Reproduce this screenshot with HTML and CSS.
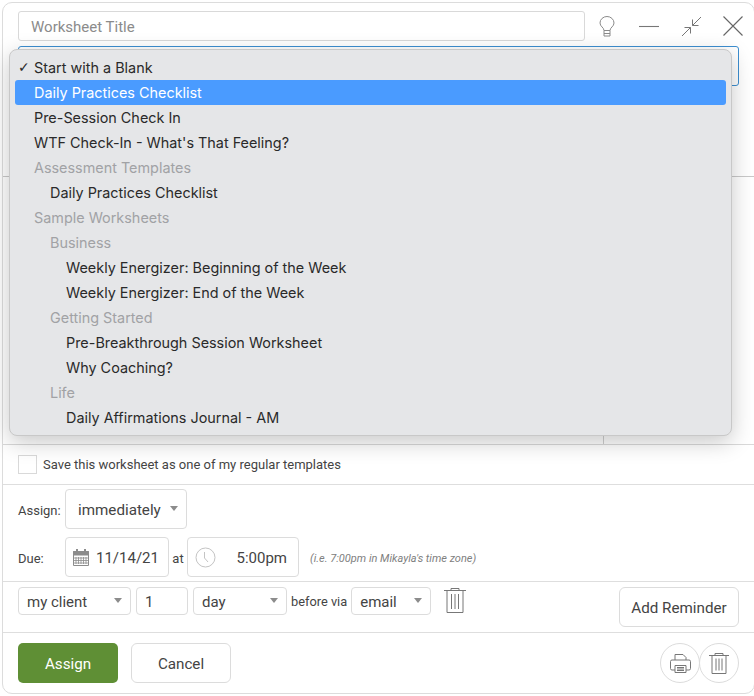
FILE: index.html
```html
<!DOCTYPE html>
<html lang="en">
<head>
<meta charset="utf-8">
<title>Worksheet</title>
<link rel="stylesheet" href="styles.css">
</head>
<body>
<div class="window">
  <div class="top">
    <div class="head-row">
      <input class="title-input" type="text" placeholder="Worksheet Title">
      <div class="head-icons">
        <svg class="ic-bulb" width="16" height="21" viewBox="0 0 16 21" fill="none" stroke="#8a8a8a" stroke-width="1"><path d="M5 14.500C5 11.500 1 10.500 1 7a7 6.500 0 0 1 14 0c0 3.500-4 4.500-4 7.500z"/><path d="M5 14.500V20h6V14.500M5 17.500h6"/></svg>
        <svg class="ic-min" width="20" height="20" viewBox="0 0 20 20" stroke="#777" stroke-width="1.100"><path d="M0 10.500H20"/></svg>
        <svg class="ic-shrink" width="21" height="21" viewBox="0 0 21 21" fill="none" stroke="#777" stroke-width="1"><path d="M20 1L11.500 9.500M11.500 3.500V9.500H17.500M1 20L9.500 11.500M3.500 11.500H9.500V17.500"/></svg>
        <svg class="ic-close" width="20" height="20" viewBox="0 0 20 20" stroke="#666" stroke-width="1.100"><path d="M.5.500L19.500 19.500M19.500.500L.5 19.500"/></svg>
      </div>
    </div>
    <div class="source-select"></div>
  </div>
  <div class="middle"><div class="side-rule"></div></div>
  <div class="save-row">
    <span class="checkbox"></span>
    <span class="save-label">Save this worksheet as one of my regular templates</span>
  </div>
  <div class="schedule">
    <div class="sched-row">
      <span class="lbl">Assign:</span>
      <div class="box assign-box"><span>immediately</span><i class="caret"></i></div>
    </div>
    <div class="sched-row">
      <span class="lbl">Due:</span>
      <div class="box date-box">
        <svg width="16" height="18" viewBox="0 0 16 18" fill="none" stroke="#8c8c8c"><path d="M.5 3.500h15v14H.5z"/><path d="M.5 3.500h15V7H.5z" fill="#8c8c8c"/><path d="M4 1v4M12 1v4" stroke-width="2"/><path d="M3 9v7M5.500 9v7M8 9v7M10.500 9v7M13 9v7M1 10h14M1 12.500h14M1 15h14" stroke-width=".8"/></svg>
        <span>11/14/21</span>
      </div>
      <span class="at">at</span>
      <div class="box time-box">
        <svg width="21" height="21" viewBox="0 0 21 21" fill="none" stroke="#c4c4c4"><circle cx="10.500" cy="10.500" r="9.500"/><path d="M9.500 5V11L13 15"/></svg>
        <span>5:00pm</span>
      </div>
      <span class="tz">(i.e. 7:00pm in Mikayla's time zone)</span>
    </div>
  </div>
  <div class="reminder">
    <div class="rem-fields">
      <div class="box sm who"><span>my client</span><i class="caret"></i></div>
      <div class="box sm num"><span>1</span></div>
      <div class="box sm unit"><span>day</span><i class="caret"></i></div>
      <span class="via">before via</span>
      <div class="box sm chan"><span>email</span><i class="caret"></i></div>
      <svg class="rem-trash" width="22" height="25" viewBox="0 0 22 25" fill="none" stroke="#777" stroke-width="1"><path d="M0 2.500H22M7 2.500V.5h8v2M3 2.500V24.500H19V2.500M7.500 6v15M11 6v15M14.500 6v15"/></svg>
    </div>
    <button class="btn add-btn" type="button">Add Reminder</button>
  </div>
  <div class="footer">
    <button class="btn-assign" type="button">Assign</button>
    <button class="btn cancel" type="button">Cancel</button>
    <div class="round-group">
      <span class="round"><svg width="21" height="19" viewBox="0 0 21 19" fill="none" stroke="#777"><path d="M5 6V.5h8l3 3V6M5 16H2a1.500 1.500 0 0 1-1.500-1.500V7.500A1.500 1.500 0 0 1 2 6h17a1.500 1.500 0 0 1 1.500 1.500v7A1.500 1.500 0 0 1 19 16h-3"/><path d="M5 11.500h11v7H5zM7 13.500h7M7 15h7M7 16.500h7"/></svg></span>
      <span class="round"><svg width="20" height="21" viewBox="0 0 20 21" fill="none" stroke="#777"><path d="M0 2.500H20M6 2.500V.5h8v2M3 2.500V20.500H17V2.500M7 5.500v12M10 5.500v12M13 5.500v12"/></svg></span>
    </div>
  </div>
  <ul class="menu">
    <li class="opt check">Start with a Blank</li>
    <li class="opt active">Daily Practices Checklist</li>
    <li class="opt">Pre-Session Check In</li>
    <li class="opt">WTF Check-In - What's That Feeling?</li>
    <li class="opt group">Assessment Templates</li>
    <li class="opt l1">Daily Practices Checklist</li>
    <li class="opt group">Sample Worksheets</li>
    <li class="opt group l1">Business</li>
    <li class="opt l2">Weekly Energizer: Beginning of the Week</li>
    <li class="opt l2">Weekly Energizer: End of the Week</li>
    <li class="opt group l1">Getting Started</li>
    <li class="opt l2">Pre-Breakthrough Session Worksheet</li>
    <li class="opt l2">Why Coaching?</li>
    <li class="opt group l1">Life</li>
    <li class="opt l2">Daily Affirmations Journal - AM</li>
  </ul>
</div>
</body>
</html>
```
FILE: styles.css
```css
* { box-sizing: border-box; }
html, body { margin: 0; height: 100%; background: #fff; overflow: hidden; }
body { padding: 2px 0 2px 2px; font-family: Roboto, "Liberation Sans", sans-serif; color: #333; }
.window { position: relative; width: 753px; height: 692px; border: 1px solid #dcdcdc; border-radius: 10px; display: flex; flex-direction: column; }
.top { height: 174px; padding: 8px 15px 0; border-bottom: 1px solid #c9c9c9; }
.head-row { display: flex; align-items: center; height: 30px; }
.title-input { flex: none; width: 567px; height: 30px; border: 1px solid #d9d9d9; border-radius: 3px; padding: 2px 12px 0; font: 15px Roboto, sans-serif; color: #333; outline: none; }
.title-input::placeholder { color: #8b8b8b; opacity: 1; }
.head-icons { display: flex; align-items: center; margin-left: 14px; }
.ic-min { margin-left: 24px; }
.ic-shrink { margin-left: 22px; }
.ic-close { margin-left: 21px; }
.source-select { height: 40px; width: 721px; margin-top: 5px; border: 1px solid #3d8fd1; border-radius: 3px; }
.middle { height: 268px; border-bottom: 1px solid #d9d9d9; display: flex; justify-content: flex-end; padding-right: 150px; }
.side-rule { width: 1px; background: #d0d0d0; }
.save-row { height: 40px; display: flex; align-items: center; padding: 0 15px; border-bottom: 1px solid #dedede; }
.checkbox { width: 19px; height: 19px; border: 1px solid #d9d9d9; }
.save-label { margin-left: 6px; font-size: 13px; color: #444; }
.schedule { height: 97px; padding-top: 4px; border-bottom: 1px solid #dedede; }
.sched-row { display: flex; align-items: center; height: 40px; padding-left: 15px; margin-bottom: 8px; }
.lbl { width: 47px; padding-top: 2px; font-size: 13px; color: #444; }
.box { display: flex; align-items: center; border: 1px solid #dcdcdc; border-radius: 4px; height: 40px; font-size: 15px; color: #444; background: #fff; position: relative; }
.box span { padding-top: 2px; }
.assign-box { width: 122px; padding-left: 12px; font-size: 15.200px; }
.caret { position: absolute; top: 50%; margin-top: -3px; width: 0; height: 0; border: 4.500px solid transparent; border-top: 5.500px solid #8c8c8c; border-bottom: 0; }
.assign-box .caret { right: 8px; }
.date-box { width: 104px; padding-left: 7px; gap: 7px; }
.at { width: 18px; padding-top: 2px; text-align: center; font-size: 13px; color: #444; }
.time-box { width: 112px; padding-left: 7px; justify-content: space-between; padding-right: 11px; }
.tz { margin-left: 11px; padding-top: 3px; font-size: 11px; font-style: italic; color: #808080; }
.reminder { height: 51px; padding: 5px 15px 0; border-bottom: 1px solid #dedede; display: flex; justify-content: space-between; position: relative; }
.rem-fields { display: flex; align-items: flex-start; }
.box.sm { height: 28px; font-size: 15px; }
.who { width: 113px; padding-left: 8px; }
.who .caret { right: 8px; }
.num { width: 52px; margin-left: 5px; padding-left: 8px; }
.unit { width: 94px; margin-left: 5px; padding-left: 8px; }
.unit .caret { right: 8px; }
.via { margin-left: 4px; font-size: 12.800px; line-height: 30px; color: #444; }
.chan { width: 80px; margin-left: 4px; padding-left: 8px; }
.chan .caret { right: 8px; }
.rem-trash { margin-left: 13px; margin-top: 1px; }
.btn { font: 15.200px Roboto, sans-serif; color: #444; background: #fff; border: 1px solid #dcdcdc; border-radius: 6px; padding: 2px 0 0; }
.add-btn { width: 120px; height: 40px; }
.footer { flex: 1; display: flex; align-items: flex-start; padding: 10px 15px 0; }
.btn-assign { width: 100px; height: 40px; border: 0; border-radius: 5px; padding: 2px 0 0; background: #5f8f35; color: #fff; font: 400 15.200px Roboto, sans-serif; }
.cancel { width: 100px; height: 40px; margin-left: 13px; }
.round-group { display: flex; margin-left: auto; }
.round { display: flex; align-items: center; justify-content: center; width: 40px; height: 40px; border: 1px solid #dcdcdc; border-radius: 50%; }
.round + .round { margin-left: -1px; }
.menu { position: absolute; left: 6px; top: 46px; width: 723px; height: 387px; margin: 0; padding: 5px 5px 0; list-style: none; background: #e5e6e8; border: 1px solid #c8c8c8; border-radius: 8px; box-shadow: 0 6px 22px rgba(0,0,0,.22); font-family: Inter, Roboto, sans-serif; font-size: 14.400px; color: #2a2a2a; }
.opt { height: 25px; line-height: 25px; padding-left: 19px; border-radius: 3px; position: relative; }
.opt.active { background: #4a9bff; color: #fff; }
.opt.group { color: #a1a2a5; }
.opt.l1 { padding-left: 35px; }
.opt.l2 { padding-left: 51px; }
.opt.check::before { content: "\2713"; position: absolute; left: 3px; font-size: 14px; font-weight: 700; font-family: "DejaVu Sans", sans-serif; }
```
